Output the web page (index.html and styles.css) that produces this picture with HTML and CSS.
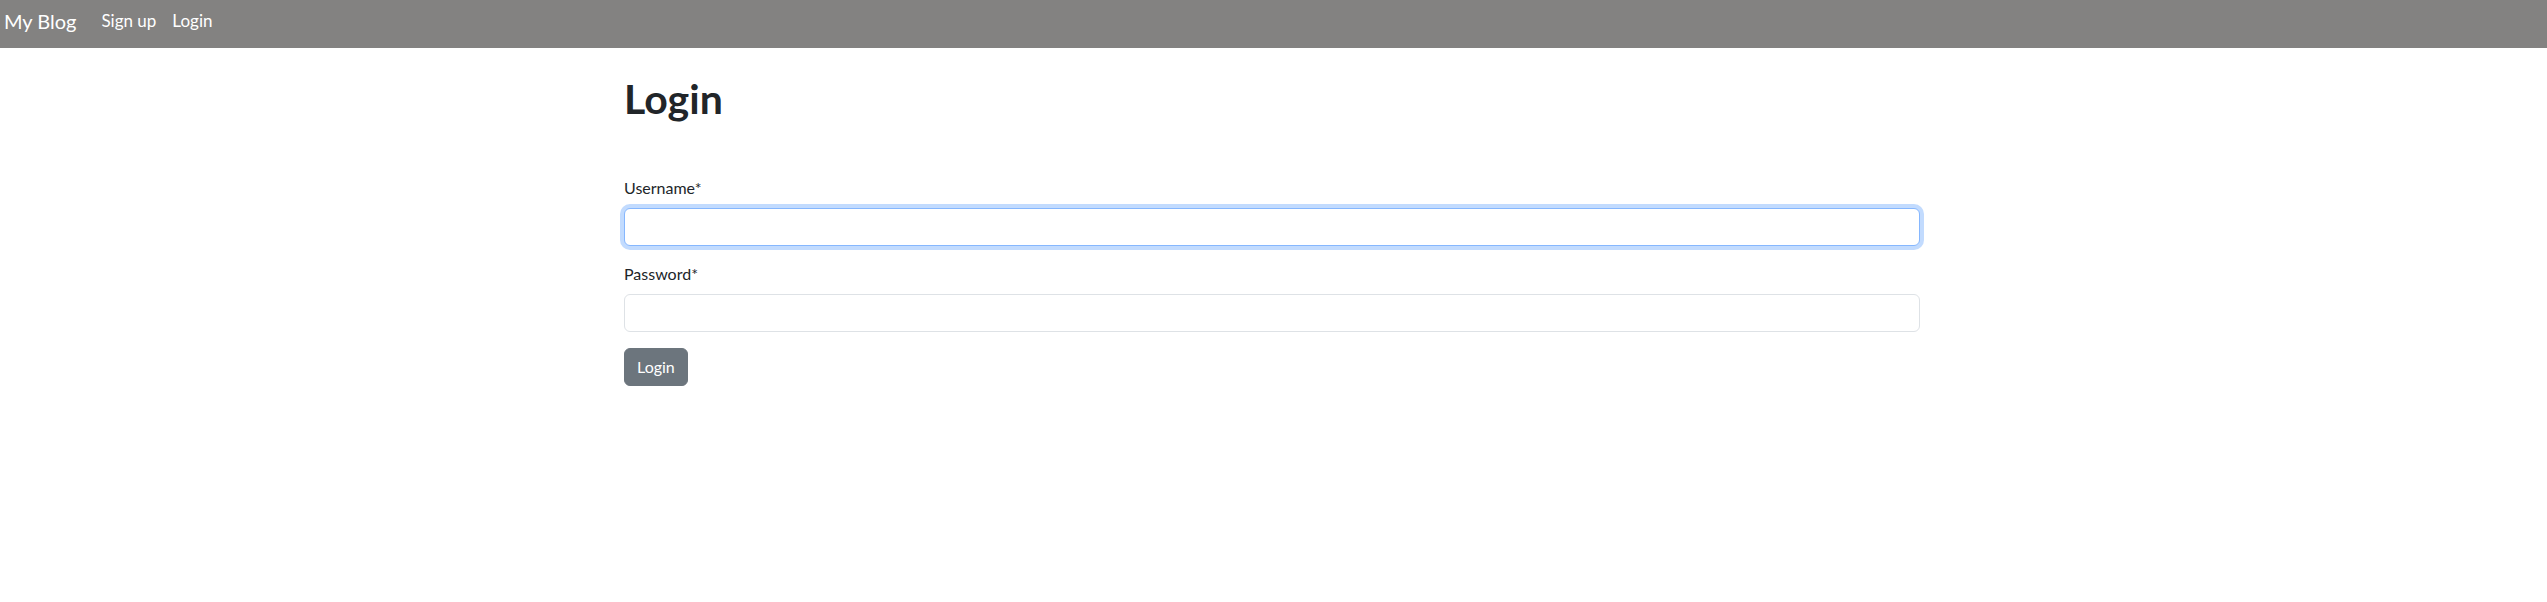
FILE: index.html
```html
<!DOCTYPE html>
<html lang="en">
<head>
<meta charset="utf-8">
<title>Login</title>
<link rel="stylesheet" href="styles.css">
</head>
<body>
<nav class="navbar">
  <a class="brand" href="#">My Blog</a>
  <ul class="nav">
    <li><a href="#">Sign up</a></li>
    <li><a href="#">Login</a></li>
  </ul>
</nav>
<main class="container">
  <h1 class="title">Login</h1>
  <form class="form">
    <div class="field">
      <label class="label">Username*</label>
      <div class="input focused"></div>
    </div>
    <div class="field">
      <label class="label">Password*</label>
      <div class="input"></div>
    </div>
    <button type="button" class="btn">Login</button>
  </form>
</main>
</body>
</html>
```
FILE: styles.css
```css
* { box-sizing: border-box; }
body {
  margin: 0;
  font-family: "Lato", "Open Sans", sans-serif;
  font-size: 16px;
  line-height: 1.5;
  color: #212529;
  background: #fff;
}
.navbar {
  height: 48px;
  background: #838281;
  display: flex;
  align-items: center;
  padding: 0 4px 6px;
}
.brand {
  color: #fff;
  text-decoration: none;
  font-size: 20px;
  margin-right: 17px;
}
.nav {
  list-style: none;
  margin: 0;
  padding: 0;
  display: flex;
}
.nav a {
  color: #fff;
  text-decoration: none;
  font-size: 17px;
  padding: 0 8px;
  display: block;
}
.container {
  width: 1299px;
  padding-right: 3px;
  margin: 0 auto;
}
.title {
  font-size: 41px;
  font-weight: 700;
  line-height: 1.2;
  margin: 26px 0 53px;
}
.field { margin-bottom: 16px; }
.label {
  display: block;
  margin-bottom: 8px;
}
.input {
  height: 38px;
  border: 1px solid #dee2e6;
  border-radius: 6px;
  background: #fff;
}
.input.focused {
  border-color: #86b7fe;
  box-shadow: 0 0 0 4px rgba(13, 110, 253, .25);
}
.btn {
  font: inherit;
  color: #fff;
  background: #6c757d;
  border: 1px solid #6c757d;
  border-radius: 6px;
  height: 38px;
  padding: 0 12px;
}
```
